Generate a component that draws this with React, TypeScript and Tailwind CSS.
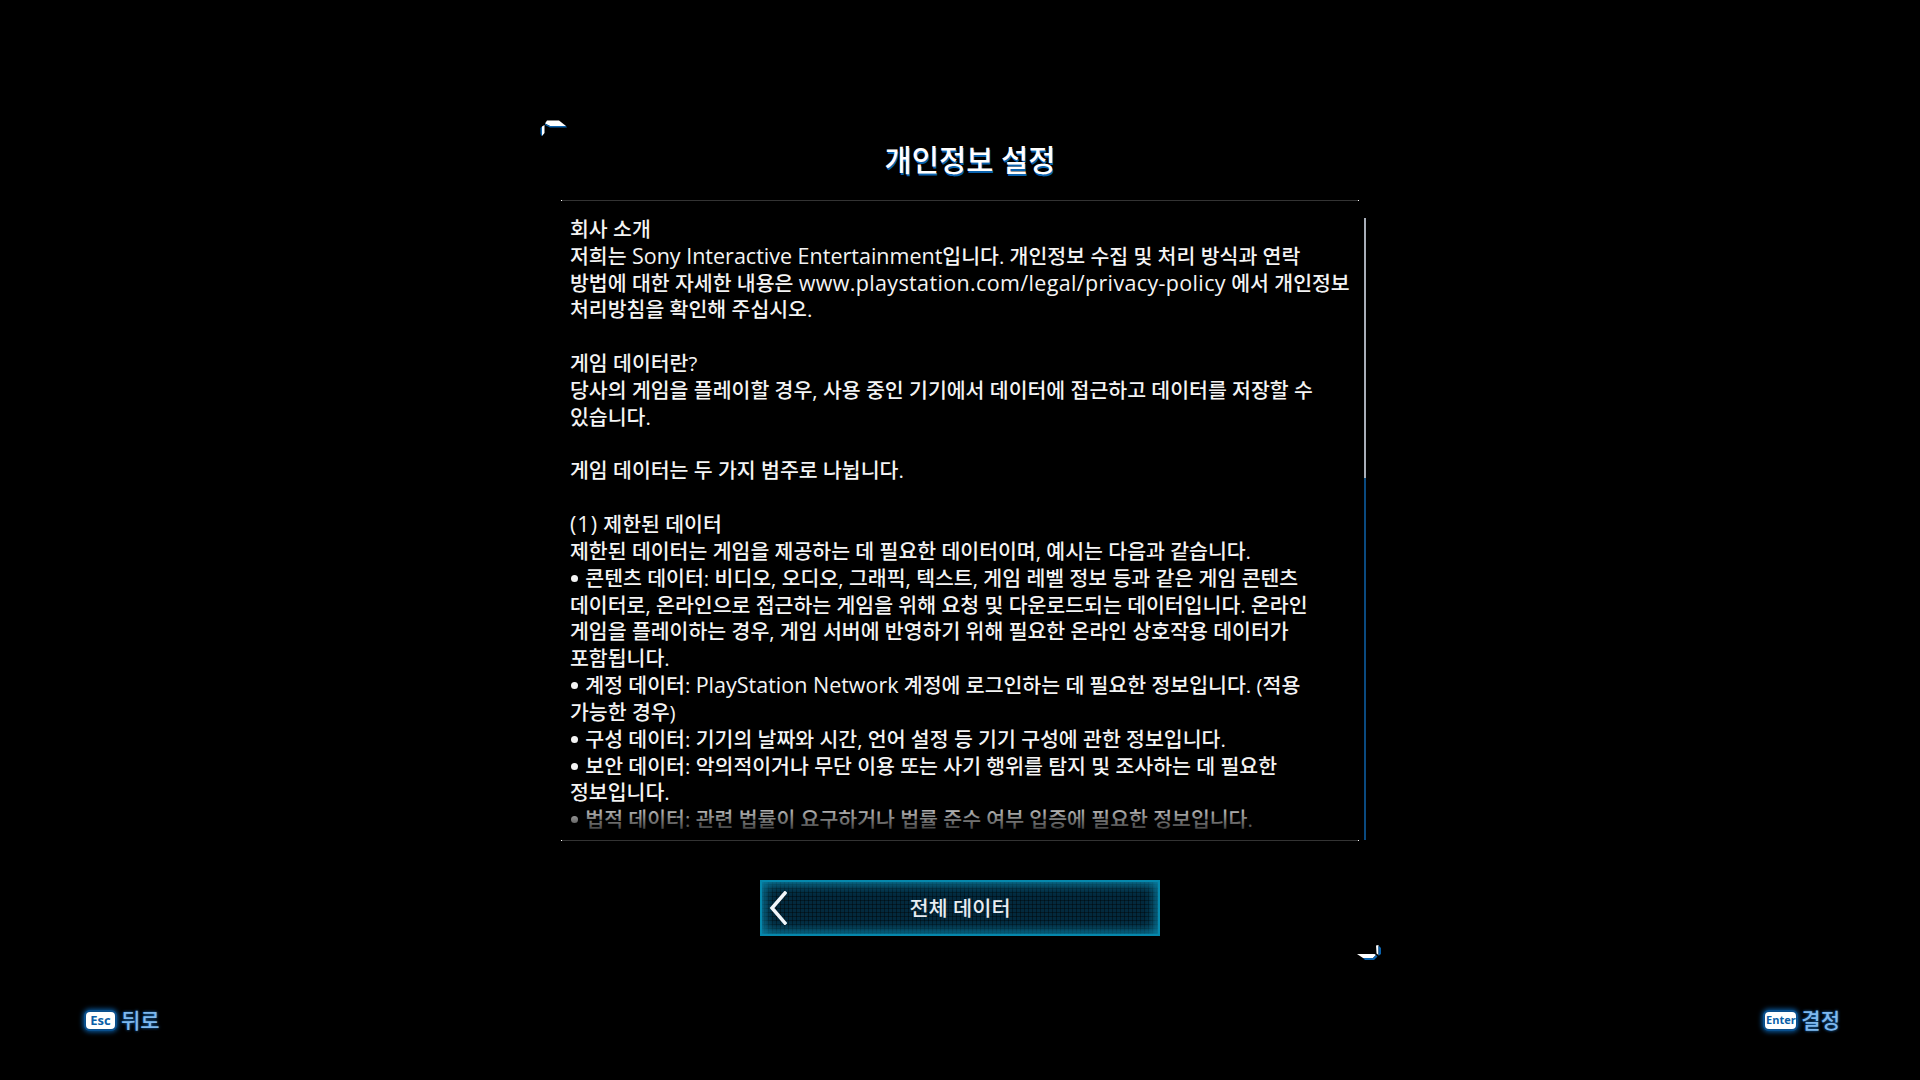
import React from "react";

const FONT = { fontFamily: '"Open Sans", "Noto Sans CJK KR", sans-serif' };

const LINES = [
  "회사 소개",
  "저희는 Sony Interactive Entertainment입니다. 개인정보 수집 및 처리 방식과 연락",
  "방법에 대한 자세한 내용은 www.playstation.com/legal/privacy-policy 에서 개인정보",
  "처리방침을 확인해 주십시오.",
  "",
  "게임 데이터란?",
  "당사의 게임을 플레이할 경우, 사용 중인 기기에서 데이터에 접근하고 데이터를 저장할 수",
  "있습니다.",
  "",
  "게임 데이터는 두 가지 범주로 나뉩니다.",
  "",
  "(1) 제한된 데이터",
  "제한된 데이터는 게임을 제공하는 데 필요한 데이터이며, 예시는 다음과 같습니다.",
  "• 콘텐츠 데이터: 비디오, 오디오, 그래픽, 텍스트, 게임 레벨 정보 등과 같은 게임 콘텐츠",
  "데이터로, 온라인으로 접근하는 게임을 위해 요청 및 다운로드되는 데이터입니다. 온라인",
  "게임을 플레이하는 경우, 게임 서버에 반영하기 위해 필요한 온라인 상호작용 데이터가",
  "포함됩니다.",
  "• 계정 데이터: PlayStation Network 계정에 로그인하는 데 필요한 정보입니다. (적용",
  "가능한 경우)",
  "• 구성 데이터: 기기의 날짜와 시간, 언어 설정 등 기기 구성에 관한 정보입니다.",
  "• 보안 데이터: 악의적이거나 무단 이용 또는 사기 행위를 탐지 및 조사하는 데 필요한",
  "정보입니다.",
  "• 법적 데이터: 관련 법률이 요구하거나 법률 준수 여부 입증에 필요한 정보입니다.",
];

// latin runs are set a bit larger, the game font is wider than Open Sans
function Line({ text }: { text: string }) {
  const parts = text.split(/(•|\(1\)|www\.playstation\.com\/legal\/privacy-policy|Sony Interactive Entertainment|PlayStation Network)/);
  return (
    <div className="h-[26.84px]">
      {parts.map((p, i) => {
        if (p === "•") return <span key={i} className="inline-block w-[7px] h-[7px] ml-[1px] mr-[2px] rounded-full bg-current align-[4px]" />;
        if (p.startsWith("www")) return <span key={i} className="text-[21.5px] tracking-[0.35px]">{p}</span>;
        if (p === "(1)") return <span key={i} className="text-[21.5px] tracking-[1px]">{p}</span>;
        if (/^(Sony|Play)/.test(p)) return <span key={i} className="text-[21.5px]">{p}</span>;
        return <span key={i}>{p}</span>;
      })}
    </div>
  );
}

function CornerTopLeft() {
  return (
    <svg width="27" height="17" viewBox="0 0 27 17" className="shrink-0">
      <path d="M7 0.5 H19 L26 6 H10 L5 3.5 Z" fill="#fff" />
      <path d="M5 3.5 L10 6 H26 L27 7.5 H10 L5 5 Z" fill="#0a62ad" />
      <path d="M0.5 8 L2 6.5 V16 H1.5 L0.5 14 Z" fill="#0a62ad" />
      <path d="M2 6.5 L4.5 5 V13 L2 16 Z" fill="#fff" />
    </svg>
  );
}

function CornerBottomRight() {
  return (
    <svg width="24" height="16" viewBox="0 0 24 16" className="shrink-0">
      <path d="M19 0.5 L21.5 0 V10 L19.5 8.5 Z" fill="#fff" />
      <path d="M21.5 0.5 L24 3 V9 L21.5 11 Z" fill="#0a62ad" />
      <path d="M0 9 H17.5 L19 10 L16 13 H6 Z" fill="#fff" />
      <path d="M6 13 H16 L19 10 L20.5 11.5 L17 15 H8 Z" fill="#0a62ad" />
    </svg>
  );
}

function KeyHint({ k, label, small = false }: { k: string; label: string; small?: boolean }) {
  return (
    <div className={`flex items-center ${small ? "gap-[5px]" : "gap-[6px]"}`}>
      <div
        className={`h-[17px] rounded-[4px] bg-white flex items-center justify-center font-bold text-[#0b5fa8] shadow-[0_0_0_2px_#0a4f8c,0_0_5px_3px_#0a5aa0] ${small ? "w-[31px] text-[11px]" : "w-[29px] text-[13px]"}`}
      >
        {k}
      </div>
      <span className="text-[21px] font-medium leading-none text-[#7fb8ee] [text-shadow:0_0_3px_#1a78d0]">{label}</span>
    </div>
  );
}

function Rule() {
  return <div className="w-[798px] h-[1px] bg-[#333] border-x border-white" />;
}

export default function App() {
  return (
    <div className="w-[1920px] h-[1080px] bg-black text-white flex flex-col overflow-hidden" style={FONT}>
      <div className="flex-1 flex flex-col items-start pl-[540px] pt-[120px]">
        <CornerTopLeft />
        <div className="pl-[21px]">
          <h1 className="w-[798px] pl-[20px] mt-[5px] h-[58px] text-center text-[29.6px] font-medium leading-[36px] text-white [text-shadow:1px_2px_0_#0a62ad]">
            개인정보 설정
          </h1>
          <Rule />
          <div className="relative w-[806px] h-[639px] flex">
            <div className="relative w-[803px] h-[639px] overflow-hidden pl-[9px] pt-[15px] text-[20.5px] font-medium leading-[26.84px] text-[#f4f4f4] whitespace-nowrap">
              {LINES.map((l, i) => (
                <Line key={i} text={l} />
              ))}
              <div className="absolute left-0 right-0 bottom-0 h-[40px] bg-gradient-to-b from-transparent to-black" />
            </div>
            <div className="w-[2px] h-[622px] mt-[17px] bg-[#0a4a80]">
              <div className="w-[2px] h-[260px] bg-[#a8aeb8]" />
            </div>
          </div>
          <Rule />
          <button className="relative ml-[199px] mt-[39px] w-[400px] h-[56px] pt-[1px] flex items-center justify-center border-0 bg-[#03293d] bg-[linear-gradient(#00000066_1px,transparent_1px),linear-gradient(90deg,#00000066_1px,transparent_1px)] bg-[size:4px_4px] shadow-[inset_0_0_0_2px_#0588ac,inset_0_0_12px_4px_#0a88ad]">
            <svg width="18" height="34" viewBox="0 0 18 34" className="absolute left-[9px] top-[11px]">
              <path d="M16 2 L3 17 L16 32" fill="none" stroke="#f2f6fa" strokeWidth="3.5" strokeLinecap="square" />
            </svg>
            <span className="text-[20.8px] font-medium text-[#e8edf2]">전체 데이터</span>
          </button>
          <div className="ml-[796px] mt-[9px]">
            <CornerBottomRight />
          </div>
        </div>
      </div>
      <div className="h-[70px] flex justify-between pl-[86px] pr-[80px] items-start">
        <KeyHint k="Esc" label="뒤로" />
        <KeyHint k="Enter" label="결정" small />
      </div>
    </div>
  );
}
